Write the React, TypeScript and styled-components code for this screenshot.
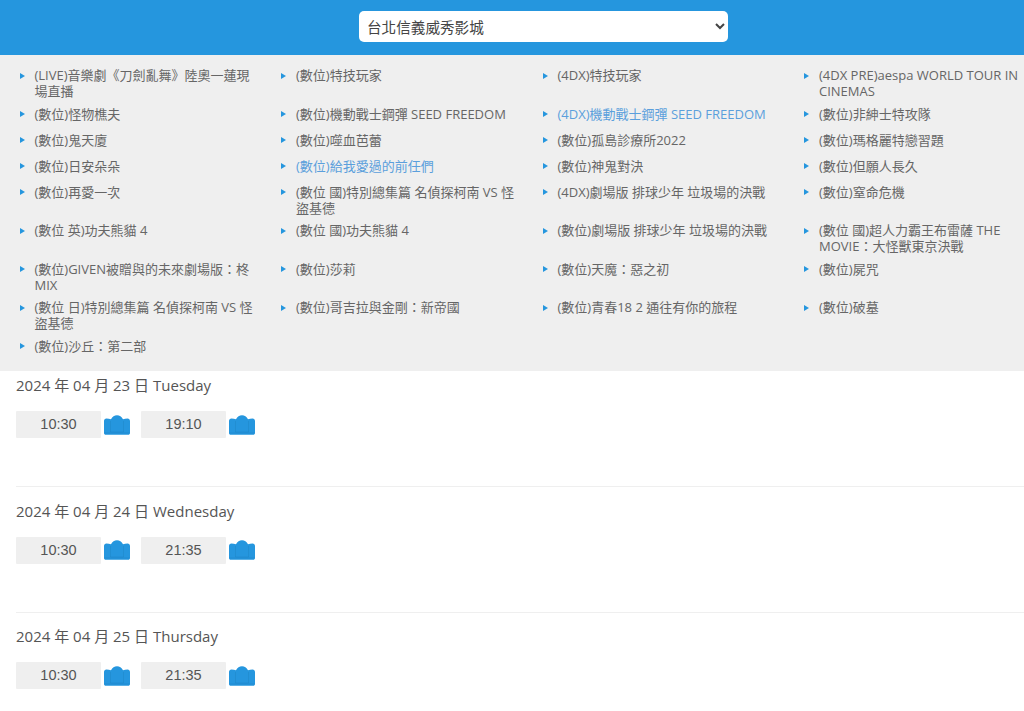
import React from "react";
import styled, { createGlobalStyle } from "styled-components";

const Global = createGlobalStyle`
  html, body { margin: 0; padding: 0; background: #fff; overflow: hidden; }
  body { font-family: "Open Sans", "Noto Sans CJK TC", sans-serif; }
`;
const Page = styled.div`width: 1024px; height: 711px; overflow: hidden;`;
const Header = styled.header`
  height: 55px; background: #2596de; display: flex; align-items: flex-start; padding: 11px 0 0 359px; box-sizing: border-box;
`;
const CinemaSelect = styled.select`
  width: 369px; height: 31px; border: 0; border-radius: 5px; background: #fff; color: #444; padding: 0 4px;
  font-family: "Open Sans", "Noto Sans CJK TC", sans-serif; font-size: 14.6px;
`;
const MoviePanel = styled.section`
  height: 316px; background: #efefef; box-sizing: border-box; padding: 12px 0 0 18px; overflow: hidden;
`;
const MovieList = styled.ul`
  list-style: none; margin: 0; padding: 0; display: grid; grid-template-columns: repeat(4, 261.5px); width: 1046px;
`;
const MovieItem = styled.li`
  position: relative; min-height: 26px; padding: 0 ${p => p.$last ? "39px" : "20px"} 6.5px 16.5px; box-sizing: border-box;
  font-size: 13px; line-height: 16px; color: ${p => p.$active ? "#5b9fdc" : "#666"};
  &::before {
    content: ""; position: absolute; left: 1.5px; top: 5.5px;
    border-left: 5px solid #2596de; border-top: 3.5px solid transparent; border-bottom: 3.5px solid transparent;
  }
`;
const DayBlock = styled.article`
  margin: 0 0 9.5px 16px; height: 116px; box-sizing: border-box; padding-top: 4px; border-bottom: 1px solid #efefef;
  &:last-child { border-bottom: 0; }
`;
const DayTitle = styled.h3`
  margin: 0; font-weight: 400; font-size: 15px; line-height: 20px; color: #555;
`;
const Sessions = styled.div`display: flex; gap: 11px; margin-top: 16px;`;
const Session = styled.div`display: flex; align-items: center; gap: 3px;`;
const TimeButton = styled.div`
  width: 85px; height: 27px; background: #efefef; border-radius: 1px; text-align: center; line-height: 27px;
  font-family: "Liberation Sans", sans-serif; font-size: 14.5px; color: #555;
`;
const Seats = () => (
  <svg width="26" height="20" viewBox="0 0 26 20">
    <path fill="#2596de" d="M0 6C0 4.4 1 3.4 2.4 3.4c1.7 0 3.3.2 4.6.8C8.4 1.6 10.4.2 13 .2s4.6 1.4 6 4c1.3-.6 2.9-.8 4.6-.8C25 3.4 26 4.4 26 6v12c0 1-.8 1.8-1.8 1.8H1.8C.8 19.8 0 19 0 18Z" />
    <path fill="none" stroke="#1a7db9" strokeWidth=".7" opacity=".45" d="M6.5 6v11h13V6M.5 18h25" />
  </svg>
);

const movies = [
  "(LIVE)音樂劇《刀劍亂舞》陸奧一蓮現場直播", "(數位)特技玩家", "(4DX)特技玩家", "(4DX PRE)aespa WORLD TOUR IN CINEMAS",
  "(數位)怪物樵夫", "(數位)機動戰士鋼彈 SEED FREEDOM", "(4DX)機動戰士鋼彈 SEED FREEDOM", "(數位)非紳士特攻隊",
  "(數位)鬼天廈", "(數位)噬血芭蕾", "(數位)孤島診療所2022", "(數位)瑪格麗特戀習題",
  "(數位)日安朵朵", "(數位)給我愛過的前任們", "(數位)神鬼對決", "(數位)但願人長久",
  "(數位)再愛一次", "(數位 國)特別總集篇 名偵探柯南 VS 怪盜基德", "(4DX)劇場版 排球少年 垃圾場的決戰", "(數位)窒命危機",
  "(數位 英)功夫熊貓 4", "(數位 國)功夫熊貓 4", "(數位)劇場版 排球少年 垃圾場的決戰", "(數位 國)超人力霸王布雷薩 THE MOVIE：大怪獸東京決戰",
  "(數位)GIVEN被贈與的未來劇場版：柊MIX", "(數位)莎莉", "(數位)天魔：惡之初", "(數位)屍咒",
  "(數位 日)特別總集篇 名偵探柯南 VS 怪盜基德", "(數位)哥吉拉與金剛：新帝國", "(數位)青春18 2 通往有你的旅程", "(數位)破墓",
  "(數位)沙丘：第二部",
];
const activeMovies = [6, 13];
const days = [
  { title: "2024 年 04 月 23 日 Tuesday", times: ["10:30", "19:10"] },
  { title: "2024 年 04 月 24 日 Wednesday", times: ["10:30", "21:35"] },
  { title: "2024 年 04 月 25 日 Thursday", times: ["10:30", "21:35"] },
];

export default function App() {
  return (
    <Page>
      <Global />
      <Header>
        <CinemaSelect defaultValue="xinyi"><option value="xinyi">台北信義威秀影城</option></CinemaSelect>
      </Header>
      <MoviePanel>
        <MovieList>
          {movies.map((m, i) => (
            <MovieItem key={m} $active={activeMovies.includes(i)} $last={i % 4 === 3}>{m}</MovieItem>
          ))}
        </MovieList>
      </MoviePanel>
      {days.map(d => (
        <DayBlock key={d.title}>
          <DayTitle>{d.title}</DayTitle>
          <Sessions>
            {d.times.map(t => (
              <Session key={t}><TimeButton>{t}</TimeButton><Seats /></Session>
            ))}
          </Sessions>
        </DayBlock>
      ))}
    </Page>
  );
}
